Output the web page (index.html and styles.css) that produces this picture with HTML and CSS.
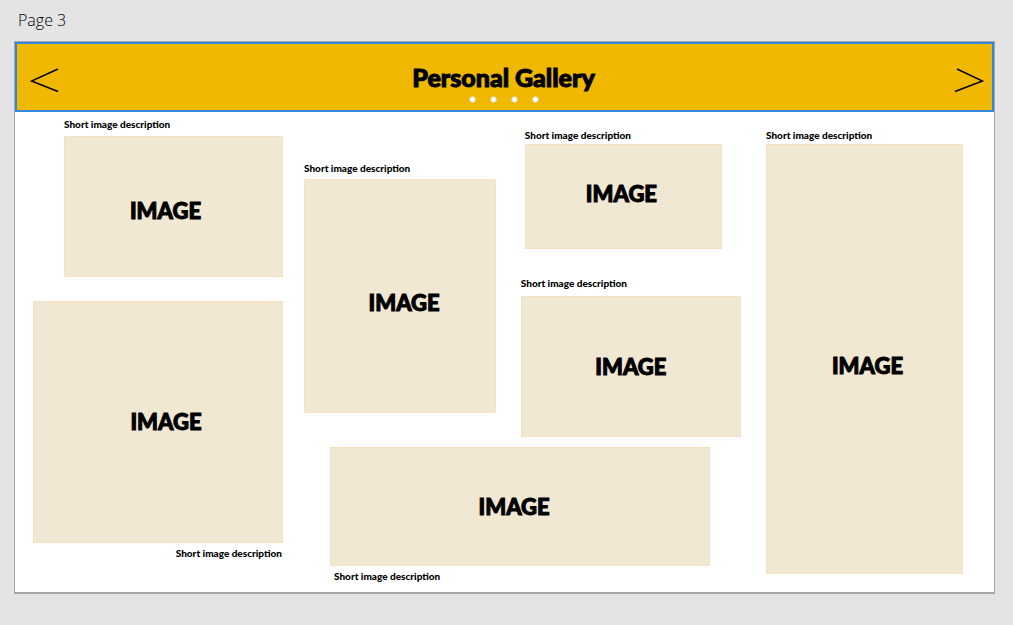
FILE: index.html
```html
<!DOCTYPE html>
<html lang="en">
<head>
<meta charset="utf-8">
<meta name="viewport" content="width=device-width, initial-scale=1">
<title>Personal Gallery</title>
<link rel="stylesheet" href="styles.css">
</head>
<body>
<p class="page-label">Page 3</p>
<main class="board">
  <header class="banner">
    <button class="arrow" type="button" aria-label="Previous">
      <svg width="30" height="26" viewBox="0 0 30 26"><path d="M28 2 1.5 14 28 24.5"/></svg>
    </button>
    <div class="heading">
      <h1 class="title">Personal Gallery</h1>
      <div class="dots">
        <button class="dot" type="button" aria-label="Slide 1"></button>
        <button class="dot" type="button" aria-label="Slide 2"></button>
        <button class="dot" type="button" aria-label="Slide 3"></button>
        <button class="dot" type="button" aria-label="Slide 4"></button>
      </div>
    </div>
    <button class="arrow" type="button" aria-label="Next">
      <svg width="30" height="26" viewBox="0 0 30 26"><path d="M3 2 28.5 14 1 24.5"/></svg>
    </button>
  </header>
  <section class="gallery">
    <div class="column column-left">
      <figure class="item item-first">
        <figcaption class="caption">Short image description</figcaption>
        <div class="image image-first">IMAGE</div>
      </figure>
      <figure class="item item-square">
        <div class="image image-square">IMAGE</div>
        <figcaption class="caption caption-end">Short image description</figcaption>
      </figure>
    </div>
    <div class="column column-middle">
      <div class="pair">
        <figure class="item item-portrait">
          <figcaption class="caption">Short image description</figcaption>
          <div class="image image-portrait">IMAGE</div>
        </figure>
        <div class="stack">
          <figure class="item item-small">
            <figcaption class="caption">Short image description</figcaption>
            <div class="image image-small">IMAGE</div>
          </figure>
          <figure class="item item-medium">
            <figcaption class="caption">Short image description</figcaption>
            <div class="image image-medium">IMAGE</div>
          </figure>
        </div>
      </div>
      <figure class="item item-wide">
        <div class="image image-wide">IMAGE</div>
        <figcaption class="caption caption-inset">Short image description</figcaption>
      </figure>
    </div>
    <div class="column column-right">
      <figure class="item">
        <figcaption class="caption">Short image description</figcaption>
        <div class="image image-tall">IMAGE</div>
      </figure>
    </div>
  </section>
</main>
</body>
</html>
```
FILE: styles.css
```css
* { box-sizing: border-box; }

body {
  margin: 0;
  padding: 8px 18px 31px 14px;
  background: #e4e4e4;
  color: #000;
  font-family: Lato, "Liberation Sans", sans-serif;
}

.page-label {
  margin: 0 0 9px 4px;
  font-family: "Open Sans", sans-serif;
  font-weight: 300;
  font-size: 16px;
  line-height: 24px;
}

.board {
  background: #fff;
  border: 1px solid #a6a6a6;
  border-bottom-width: 2px;
}

.banner {
  display: flex;
  justify-content: space-between;
  align-items: center;
  padding: 6px 8px 0 13px;
  height: 70px;
  background: #f0b800;
  border: 2px solid #3487df;
}

.arrow {
  padding: 0;
  border: 0;
  background: none;
  line-height: 0;
}

.arrow path {
  fill: none;
  stroke: #000;
  stroke-width: 1.4;
}

.heading {
  display: flex;
  flex-direction: column;
  align-items: center;
  gap: 4px;
  margin-right: 7px;
  padding-top: 4px;
}

.title {
  margin: 0;
  font-size: 25px;
  font-weight: 900;
  line-height: 30px;
  -webkit-text-stroke: 1px #000;
}

.dots {
  display: flex;
  gap: 14px;
}

.dot {
  width: 7px;
  height: 7px;
  padding: 0;
  border: 1px solid #d8c690;
  border-radius: 50%;
  background: #fff;
}

.gallery {
  display: flex;
  align-items: flex-start;
  padding: 5px 31px 9px 18px;
}

.column-left { flex: 250 1 0; }
.column-middle { flex: 437 1 0; margin: 0 25px 0 21px; }
.column-right { flex: 197 1 0; padding-top: 11px; }

.pair {
  display: flex;
  justify-content: space-between;
}

.stack {
  width: 50.4%;
  padding-top: 11px;
}

.item { margin: 0; }
.item-first { width: 87.6%; margin: 0 0 24px auto; }
.item-portrait { width: 44%; padding-top: 44px; }
.item-small { width: 89.6%; margin: 0 0 27px 4px; }
.item-wide { width: 87%; margin: 10px 0 0 26px; }

.caption {
  font-size: 10px;
  font-weight: 900;
  line-height: 14px;
  white-space: nowrap;
}

.item-portrait .caption { padding-bottom: 4px; }
.item-first .caption { padding-bottom: 5px; }
.item-medium .caption { padding-bottom: 6px; }
.item-small .caption,
.column-right .caption { padding-bottom: 2px; }
.caption-end { padding: 3px 1px 0 0; text-align: right; }
.caption-inset { padding: 3px 0 0 4px; }

.image {
  display: flex;
  align-items: center;
  justify-content: center;
  background: #f1e8d4;
  border: 1px solid #f5e1c0;
  font-size: 22px;
  font-weight: 900;
  line-height: 30px;
  -webkit-text-stroke: 1px #000;
}

.image-first { aspect-ratio: 219 / 141; padding: 8px 16px 0 0; }
.image-square { aspect-ratio: 250 / 242; padding-left: 16px; }
.image-portrait { aspect-ratio: 192 / 234; padding: 14px 0 0 8px; }
.image-small { aspect-ratio: 197 / 105; padding: 0 4px 6px 0; }
.image-medium { aspect-ratio: 220 / 141; }
.image-wide { aspect-ratio: 380 / 119; padding-right: 12px; }
.image-tall { aspect-ratio: 197 / 430; padding: 14px 0 0 6px; }
```
